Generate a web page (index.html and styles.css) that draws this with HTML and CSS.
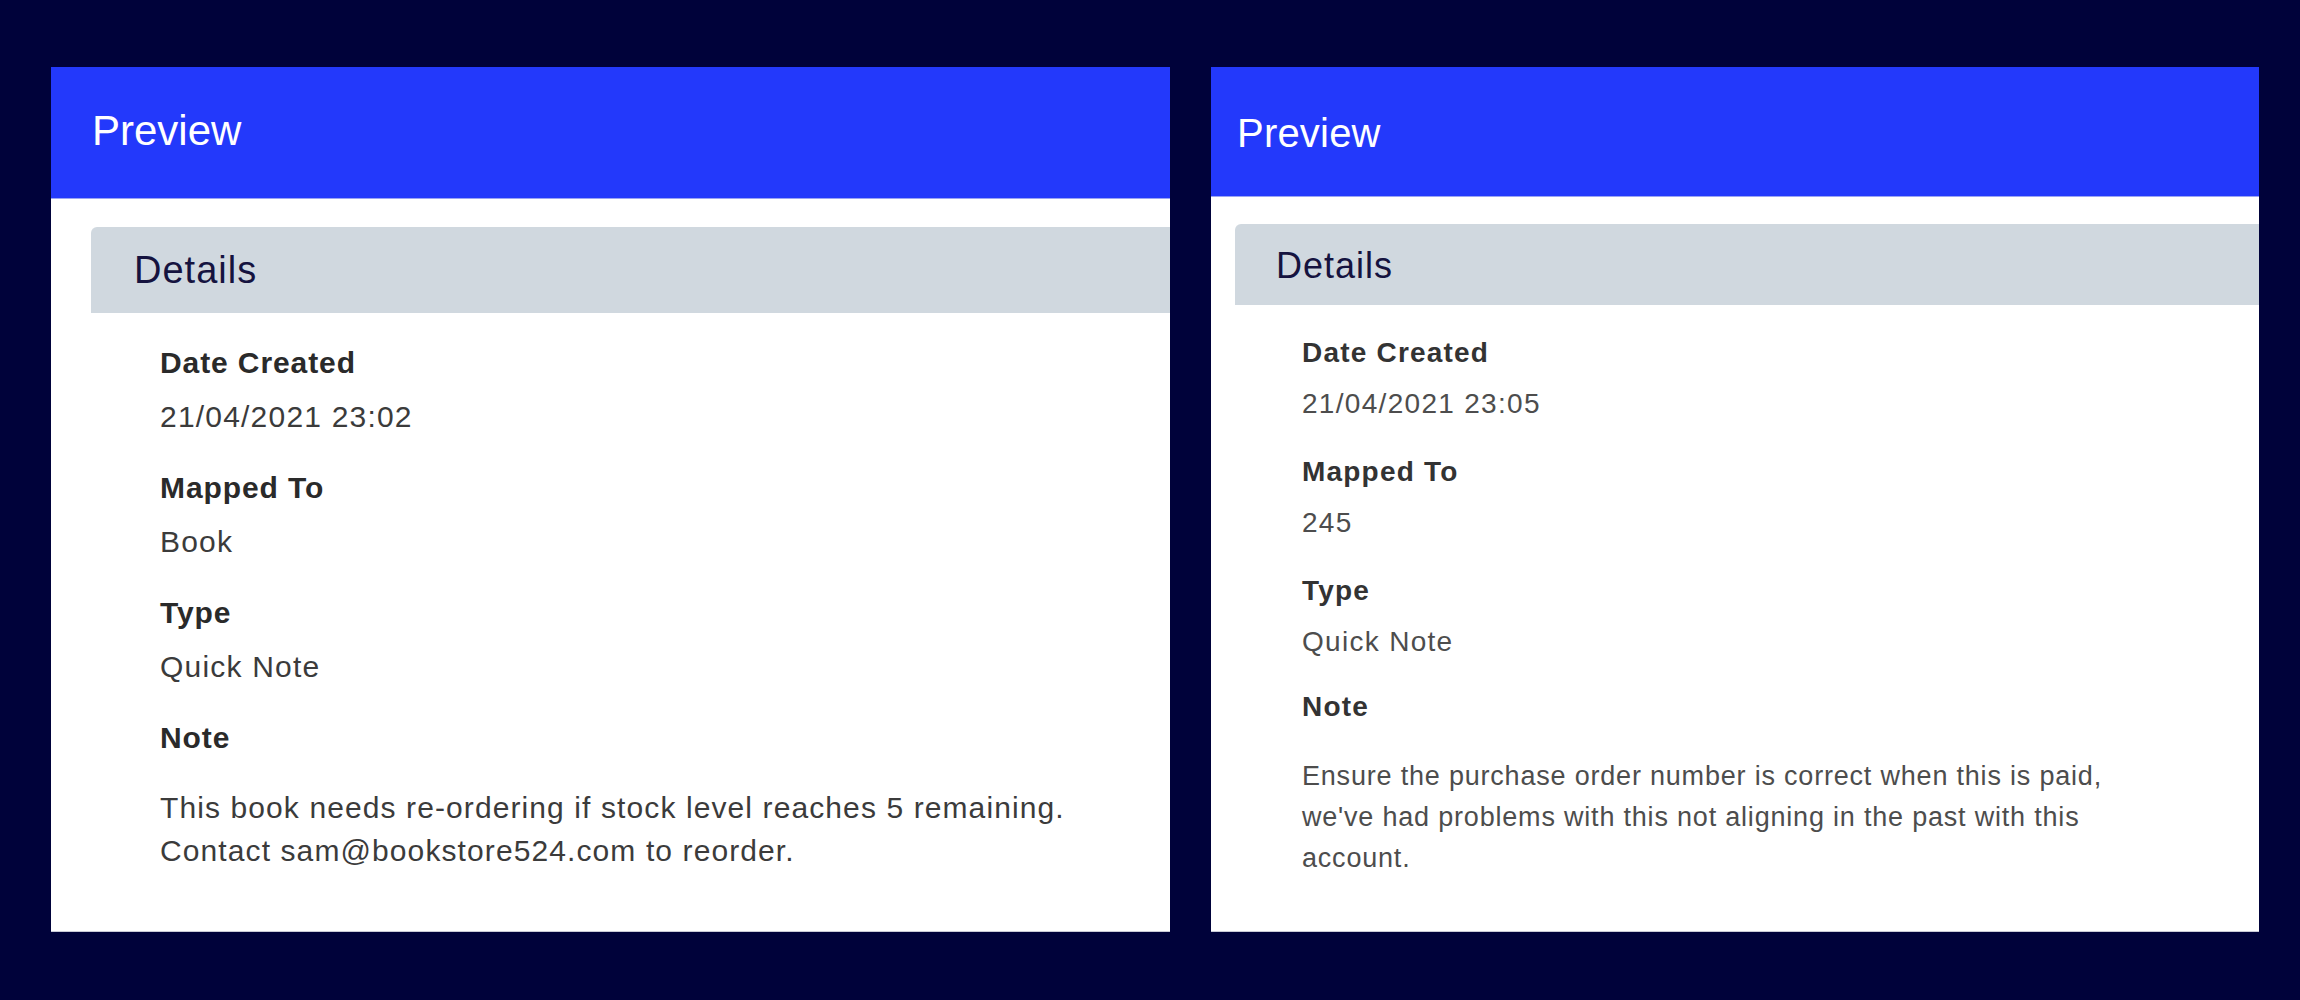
FILE: index.html
```html
<!DOCTYPE html>
<html lang="en">
<head>
<meta charset="utf-8">
<title>Preview</title>
<link rel="stylesheet" href="styles.css">
</head>
<body>
<main class="board">
  <section class="panel panel--a">
    <header class="panel__head">Preview</header>
    <div class="section-bar"><h2 class="section-bar__title">Details</h2></div>
    <dl class="fields">
      <div class="field">
        <dt class="field__label">Date Created</dt>
        <dd class="field__value">21/04/2021 23:02</dd>
      </div>
      <div class="field">
        <dt class="field__label">Mapped To</dt>
        <dd class="field__value">Book</dd>
      </div>
      <div class="field">
        <dt class="field__label">Type</dt>
        <dd class="field__value">Quick Note</dd>
      </div>
      <div class="field field--note">
        <dt class="field__label">Note</dt>
        <dd class="field__value field__value--note">This book needs re-ordering if stock level reaches 5 remaining. Contact sam@bookstore524.com to reorder.</dd>
      </div>
    </dl>
  </section>

  <section class="panel panel--b">
    <header class="panel__head">Preview</header>
    <div class="section-bar"><h2 class="section-bar__title">Details</h2></div>
    <dl class="fields">
      <div class="field">
        <dt class="field__label">Date Created</dt>
        <dd class="field__value">21/04/2021 23:05</dd>
      </div>
      <div class="field">
        <dt class="field__label">Mapped To</dt>
        <dd class="field__value">245</dd>
      </div>
      <div class="field">
        <dt class="field__label">Type</dt>
        <dd class="field__value">Quick Note</dd>
      </div>
      <div class="field field--note">
        <dt class="field__label">Note</dt>
        <dd class="field__value field__value--note">Ensure the purchase order number is correct when this is paid, we've had problems with this not aligning in the past with this account.</dd>
      </div>
    </dl>
  </section>
</main>
</body>
</html>
```
FILE: styles.css
```css
html, body {
  margin: 0;
  padding: 0;
}

body {
  background: #00023a;
  font-family: "Liberation Sans", Arial, Helvetica, sans-serif;
  width: 2300px;
  height: 1000px;
  overflow: hidden;
}

.board {
  display: flex;
  align-items: flex-start;
  gap: 41px;
  padding: 67px 0 0 51px;
}

.panel {
  background: #ffffff;
  height: 865px;
  display: flex;
  flex-direction: column;
  box-sizing: border-box;
  border-bottom: 1px solid #c9cad6;
}

.panel--a { width: 1119px; }
.panel--b { width: 1048px; }

.panel__head {
  background: #2339fb;
  color: #ffffff;
  display: flex;
  align-items: center;
  box-sizing: border-box;
  border-bottom: 1px solid #9aa4f4;
}

.panel--a .panel__head {
  height: 132px;
  padding-left: 41px;
  padding-bottom: 4px;
  font-size: 42px;
}

.panel--b .panel__head {
  height: 130px;
  padding-left: 26px;
  font-size: 40px;
  padding-top: 4px;
  letter-spacing: 0.2px;
}

.section-bar {
  background: #d0d8df;
  display: flex;
  align-items: center;
  border-radius: 6px 0 0 0;
  box-sizing: border-box;
}

.section-bar__title {
  margin: 0;
  font-weight: normal;
  color: #15133f;
  letter-spacing: 1px;
  line-height: 1;
}

.panel--a .section-bar {
  margin: 28px 0 0 40px;
  height: 86px;
  padding-left: 43px;
}
.panel--a .section-bar__title { font-size: 38px; }

.panel--b .section-bar {
  margin: 27px 0 0 24px;
  height: 81px;
  padding-left: 41px;
  padding-top: 2px;
}
.panel--b .section-bar__title { font-size: 36px; }

.fields {
  margin: 0;
  display: flex;
  flex-direction: column;
}

.field__label {
  font-weight: bold;
}

.field__value {
  margin: 0;
}

/* Panel A metrics */
.panel--a .fields {
  padding: 30px 40px 0 109px;
  gap: 31px;
}
.panel--a .field__label {
  font-size: 30px;
  line-height: 40px;
  letter-spacing: 0.9px;
  color: #2a2a2a;
}
.panel--a .field__value {
  font-size: 30px;
  line-height: 40px;
  letter-spacing: 1.2px;
  color: #3b3b3b;
  margin-top: 14px;
}
.panel--a .field__value--note {
  line-height: 43px;
  letter-spacing: 1.1px;
  margin-top: 28px;
}

/* Panel B metrics */
.panel--b .fields {
  padding: 29px 0 0 91px;
}
.panel--b .field + .field {
  margin-top: 30px;
}
.panel--b .field + .field--note {
  margin-top: 27px;
}
.panel--b .field__label {
  font-size: 28px;
  line-height: 38px;
  letter-spacing: 1.2px;
  color: #333333;
}
.panel--b .field__value {
  font-size: 28px;
  line-height: 38px;
  letter-spacing: 1.3px;
  color: #4d4d4d;
  margin-top: 13px;
}
.panel--b .field__value--note {
  font-size: 27px;
  line-height: 41px;
  letter-spacing: 0.8px;
  margin-top: 30px;
  max-width: 860px;
}
```
